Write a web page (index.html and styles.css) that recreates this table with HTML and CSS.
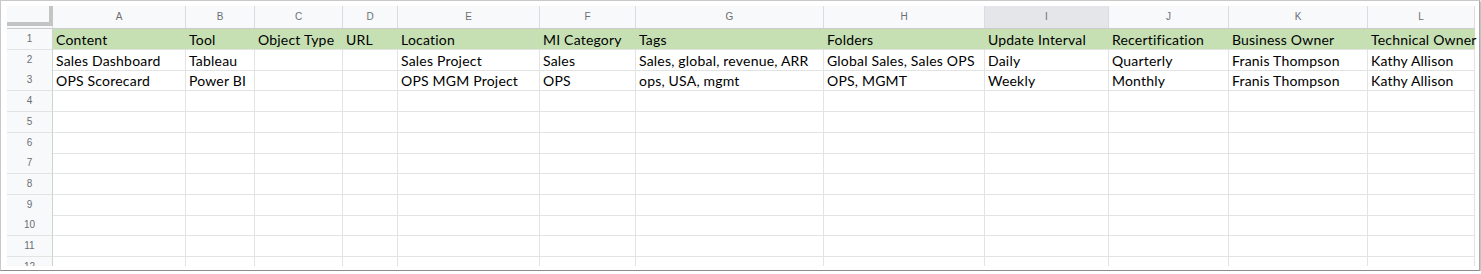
FILE: index.html
```html
<!DOCTYPE html>
<html>
<head>
<meta charset="utf-8">
<link rel="stylesheet" href="styles.css">
</head>
<body>
<div class="frame">
  <div class="sheet">
    <div class="row head">
      <div class="corner"><div class="bars"></div></div>
      <div class="ch">A</div><div class="ch">B</div><div class="ch">C</div><div class="ch">D</div>
      <div class="ch">E</div><div class="ch">F</div><div class="ch">G</div><div class="ch">H</div>
      <div class="ch sel">I</div><div class="ch">J</div><div class="ch">K</div><div class="ch">L</div>
    </div>
    <div class="row green">
      <div class="rh">1</div>
      <div class="c">Content</div><div class="c">Tool</div><div class="c">Object Type</div><div class="c">URL</div>
      <div class="c">Location</div><div class="c">MI Category</div><div class="c">Tags</div><div class="c">Folders</div>
      <div class="c">Update Interval</div><div class="c">Recertification</div><div class="c">Business Owner</div><div class="c">Technical Owner</div>
    </div>
    <div class="row">
      <div class="rh">2</div>
      <div class="c">Sales Dashboard</div><div class="c">Tableau</div><div class="c"></div><div class="c"></div>
      <div class="c">Sales Project</div><div class="c">Sales</div><div class="c">Sales, global, revenue, ARR</div><div class="c">Global Sales, Sales OPS</div>
      <div class="c">Daily</div><div class="c">Quarterly</div><div class="c">Franis Thompson</div><div class="c">Kathy Allison</div>
    </div>
    <div class="row">
      <div class="rh">3</div>
      <div class="c">OPS Scorecard</div><div class="c">Power BI</div><div class="c"></div><div class="c"></div>
      <div class="c">OPS MGM Project</div><div class="c">OPS</div><div class="c">ops, USA, mgmt</div><div class="c">OPS, MGMT</div>
      <div class="c">Weekly</div><div class="c">Monthly</div><div class="c">Franis Thompson</div><div class="c">Kathy Allison</div>
    </div>
    <div class="row"><div class="rh">4</div><div class="c"></div><div class="c"></div><div class="c"></div><div class="c"></div><div class="c"></div><div class="c"></div><div class="c"></div><div class="c"></div><div class="c"></div><div class="c"></div><div class="c"></div><div class="c"></div></div>
    <div class="row"><div class="rh">5</div><div class="c"></div><div class="c"></div><div class="c"></div><div class="c"></div><div class="c"></div><div class="c"></div><div class="c"></div><div class="c"></div><div class="c"></div><div class="c"></div><div class="c"></div><div class="c"></div></div>
    <div class="row"><div class="rh">6</div><div class="c"></div><div class="c"></div><div class="c"></div><div class="c"></div><div class="c"></div><div class="c"></div><div class="c"></div><div class="c"></div><div class="c"></div><div class="c"></div><div class="c"></div><div class="c"></div></div>
    <div class="row"><div class="rh">7</div><div class="c"></div><div class="c"></div><div class="c"></div><div class="c"></div><div class="c"></div><div class="c"></div><div class="c"></div><div class="c"></div><div class="c"></div><div class="c"></div><div class="c"></div><div class="c"></div></div>
    <div class="row"><div class="rh">8</div><div class="c"></div><div class="c"></div><div class="c"></div><div class="c"></div><div class="c"></div><div class="c"></div><div class="c"></div><div class="c"></div><div class="c"></div><div class="c"></div><div class="c"></div><div class="c"></div></div>
    <div class="row"><div class="rh">9</div><div class="c"></div><div class="c"></div><div class="c"></div><div class="c"></div><div class="c"></div><div class="c"></div><div class="c"></div><div class="c"></div><div class="c"></div><div class="c"></div><div class="c"></div><div class="c"></div></div>
    <div class="row"><div class="rh">10</div><div class="c"></div><div class="c"></div><div class="c"></div><div class="c"></div><div class="c"></div><div class="c"></div><div class="c"></div><div class="c"></div><div class="c"></div><div class="c"></div><div class="c"></div><div class="c"></div></div>
    <div class="row"><div class="rh">11</div><div class="c"></div><div class="c"></div><div class="c"></div><div class="c"></div><div class="c"></div><div class="c"></div><div class="c"></div><div class="c"></div><div class="c"></div><div class="c"></div><div class="c"></div><div class="c"></div></div>
    <div class="row"><div class="rh">12</div><div class="c"></div><div class="c"></div><div class="c"></div><div class="c"></div><div class="c"></div><div class="c"></div><div class="c"></div><div class="c"></div><div class="c"></div><div class="c"></div><div class="c"></div><div class="c"></div></div>
  </div>
</div>
</body>
</html>
```

FILE: styles.css
```css
html, body {
  margin: 0;
  padding: 0;
  background: #ffffff;
}
.frame {
  box-sizing: border-box;
  width: 1480px;
  height: 271px;
  border: 1px solid #c9c9c9;
  border-right-color: #a9a9a9;
  border-bottom-color: #8c8c8c;
  box-shadow: 1px 1px 2px rgba(0, 0, 0, 0.35);
  padding: 5px 0 0 6px;
  background: #fff;
  overflow: hidden;
}
.sheet {
  width: 1471px;
  height: 260px;
  overflow: hidden;
}
.row {
  display: grid;
  grid-template-columns: 46px 133px 69px 88px 55px 142px 96px 188px 161px 124px 120px 139px 107px;
  height: 20.73px;
}
.row > div {
  box-sizing: border-box;
  border-right: 1px solid #e2e3e3;
  border-bottom: 1px solid #e2e3e3;
  white-space: nowrap;
}
.row.head {
  height: 23px;
}
.head > div {
  background: #f8f9fa;
  border-right-color: #dadcdf;
  border-bottom-color: #c9cbcd;
}
.ch {
  font-family: "Liberation Sans", Arial, sans-serif;
  font-size: 10px;
  color: #6b6f74;
  text-align: center;
  line-height: 22px;
}
.ch.sel {
  background: #e4e6e9 !important;
}
.corner {
  padding: 0;
}
.bars {
  box-sizing: border-box;
  width: 46px;
  height: 20px;
  border-right: 4px solid #c4c4c4;
  border-bottom: 4px solid #c4c4c4;
}
.rh {
  background: #f8f9fa;
  border-right-color: #cfd1d3 !important;
  font-family: "Liberation Sans", Arial, sans-serif;
  font-size: 10px;
  color: #6b6f74;
  text-align: center;
  line-height: 20px;
}
.c {
  font-family: Lato, "Open Sans", sans-serif;
  font-size: 14px;
  letter-spacing: 0.2px;
  color: #000;
  padding: 1px 0 0 3px;
  line-height: 19px;
  overflow: visible;
}
.green .c {
  background: #c6e0b4;
  border-right-color: #c6e0b4;
}
```
